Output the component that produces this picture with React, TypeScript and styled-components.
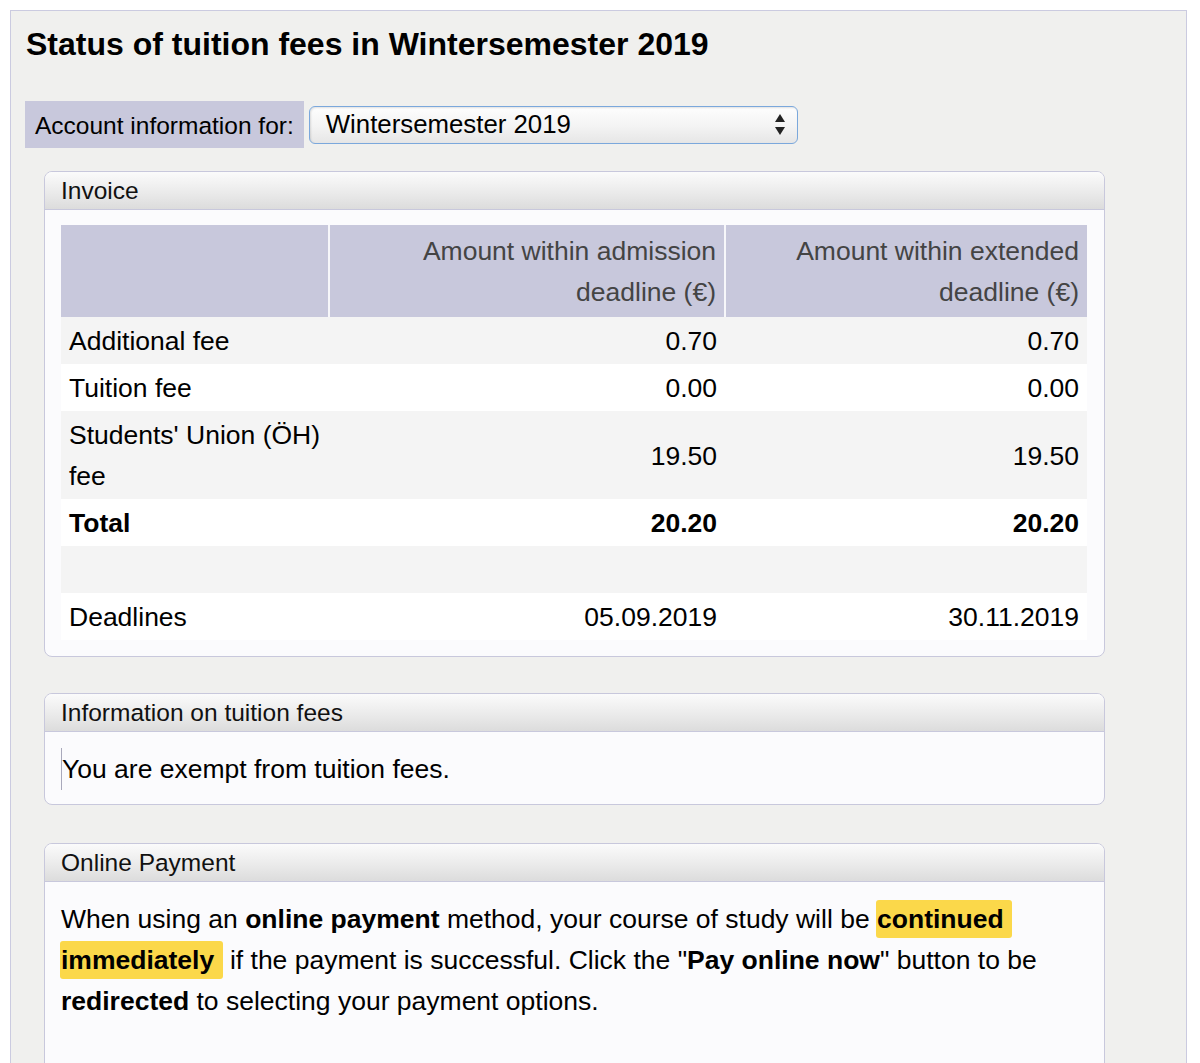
import React from 'react';
import styled, { createGlobalStyle } from 'styled-components';

// ! global
const GlobalStyle = createGlobalStyle`
  html, body {
    margin: 0;
    padding: 0;
    background: #ffffff;
  }
  body {
    font-family: 'Liberation Sans', Helvetica, Arial, sans-serif;
    color: #000;
  }
`;

// ! styled components
const Frame = styled.div`
  box-sizing: border-box;
  width: 1177px;
  min-height: 1100px;
  margin: 10px 0 0 10px;
  padding: 14px 14px 0 14px;
  background: #f0f0ee;
  border: 1px solid #cbcbe0;
  border-bottom: none;
`;

const Title = styled.h1`
  margin: 0 0 38px 1px;
  font-size: 32px;
  line-height: 38px;
  font-weight: bold;
`;

const AccountRow = styled.div`
  display: flex;
  align-items: center;
  gap: 5px;
`;

const AccountLabel = styled.div`
  height: 47px;
  line-height: 49px;
  padding: 0 10px;
  background: #c8c8dc;
  font-size: 24.5px;
`;

const SelectBox = styled.div`
  box-sizing: border-box;
  width: 489px;
  height: 38px;
  display: flex;
  align-items: center;
  justify-content: space-between;
  padding: 0 11px 0 16px;
  border: 1px solid #7ba8dc;
  border-radius: 6px;
  background: linear-gradient(to bottom, #fefefe 0%, #f3f3f3 55%, #e6e6e6 100%);
  box-shadow: inset 1px 1px 2px rgba(0, 0, 0, 0.12);
  font-size: 25.8px;
`;

const Panel = styled.section<{ $gap: number }>`
  width: 1061px;
  box-sizing: border-box;
  margin: ${(p) => p.$gap}px 0 0 19px;
  border: 1px solid #c8c8dc;
  border-radius: 8px;
  background: #fbfbfd;
  overflow: hidden;
`;

const PanelHeader = styled.div`
  height: 37px;
  line-height: 37px;
  padding: 0 16px;
  font-size: 24.5px;
  color: #111;
  background: linear-gradient(to bottom, #fbfbfb 0%, #e9e9e9 60%, #dcdcdc 100%);
  border-bottom: 1px solid #c8c8dc;
`;

const PanelBody = styled.div<{ $pad: string }>`
  padding: ${(p) => p.$pad};
`;

const FeeTable = styled.table`
  width: 1026px;
  border-collapse: collapse;
  table-layout: fixed;
  font-size: 26.5px;
`;

const HeadCell = styled.th`
  padding: 6px 8px 4px;
  line-height: 41px;
  background: #c8c8dc;
  color: #444;
  font-weight: normal;
  text-align: right;
  vertical-align: middle;

  & + & {
    border-left: 2px solid #f7f7fa;
  }
`;

const Row = styled.tr<{ $shade: boolean }>`
  background: ${(p) => (p.$shade ? '#f4f4f4' : '#ffffff')};
`;

const Cell = styled.td<{ $num?: boolean; $bold?: boolean }>`
  padding: ${(p) => (p.$num ? '4px 8px 2px' : '4px 4px 2px 8px')};
  line-height: 41px;
  vertical-align: middle;
  text-align: ${(p) => (p.$num ? 'right' : 'left')};
  font-weight: ${(p) => (p.$bold ? 'bold' : 'normal')};
`;

const Notice = styled.div`
  border-left: 1px solid #a9a9bb;
  line-height: 42px;
  font-size: 26.5px;
`;

const Paragraph = styled.p`
  margin: 0;
  font-size: 26.5px;
  line-height: 41px;
`;

const Mark = styled.b`
  padding: 4px 1px;
  margin-left: -1px;
  background: #fbd84a;
  border-radius: 3px;
`;

const SelectArrows = () => (
  <svg width="12" height="21" viewBox="0 0 12 21">
    <polygon points="6,0 11,8 1,8" fill="#222" />
    <polygon points="1,13 11,13 6,21" fill="#222" />
  </svg>
);

const rows = [
  { label: 'Additional fee', a: '0.70', b: '0.70' },
  { label: 'Tuition fee', a: '0.00', b: '0.00' },
  { label: "Students' Union (ÖH) fee", a: '19.50', b: '19.50' },
  { label: 'Total', a: '20.20', b: '20.20', bold: true },
  { label: '\u00a0', a: '', b: '' },
  { label: 'Deadlines', a: '05.09.2019', b: '30.11.2019' },
];

const App = () => {
  return (
    <>
      <GlobalStyle />
      <Frame>
        <Title>Status of tuition fees in Wintersemester 2019</Title>

        {/* semester picker */}
        <AccountRow>
          <AccountLabel>Account information for:</AccountLabel>
          <SelectBox>
            <span>Wintersemester 2019</span>
            <SelectArrows />
          </SelectBox>
        </AccountRow>

        {/* invoice */}
        <Panel $gap={23}>
          <PanelHeader>Invoice</PanelHeader>
          <PanelBody $pad="15px 16px 16px">
            <FeeTable>
              <colgroup>
                <col style={{ width: 268 }} />
                <col style={{ width: 396 }} />
                <col style={{ width: 362 }} />
              </colgroup>
              <thead>
                <tr>
                  <HeadCell />
                  <HeadCell>Amount within admission deadline (€)</HeadCell>
                  <HeadCell>Amount within extended deadline (€)</HeadCell>
                </tr>
              </thead>
              <tbody>
                {rows.map((r, i) => (
                  <Row key={i} $shade={i % 2 === 0}>
                    <Cell $bold={r.bold}>{r.label}</Cell>
                    <Cell $num $bold={r.bold}>{r.a}</Cell>
                    <Cell $num $bold={r.bold}>{r.b}</Cell>
                  </Row>
                ))}
              </tbody>
            </FeeTable>
          </PanelBody>
        </Panel>

        {/* info */}
        <Panel $gap={36}>
          <PanelHeader>Information on tuition fees</PanelHeader>
          <PanelBody $pad="16px 16px 14px">
            <Notice>You are exempt from tuition fees.</Notice>
          </PanelBody>
        </Panel>

        {/* online payment */}
        <Panel $gap={38}>
          <PanelHeader>Online Payment</PanelHeader>
          <PanelBody $pad="17px 16px 80px">
            <Paragraph>
              When using an <b>online payment</b> method, your course of study will be{' '}
              <Mark>continued&nbsp;</Mark> <Mark>immediately&nbsp;</Mark> if the payment is
              successful. Click the "<b>Pay online now</b>" button to be <b>redirected</b> to
              selecting your payment options.
            </Paragraph>
          </PanelBody>
        </Panel>
      </Frame>
    </>
  );
};

export default App;
